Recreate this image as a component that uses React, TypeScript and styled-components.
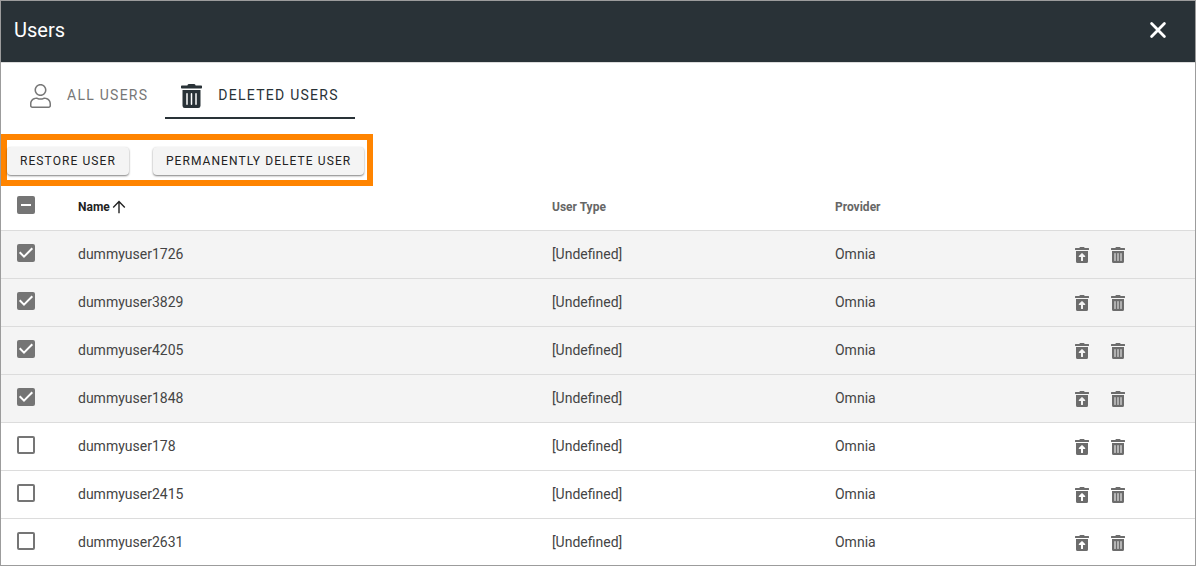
import React, { useState } from "react";
import styled, { createGlobalStyle } from "styled-components";
import { FaTrashAlt, FaTrashRestoreAlt } from "react-icons/fa";

const GlobalStyle = createGlobalStyle`
  *, *::before, *::after { box-sizing: border-box; }
  body {
    margin: 0;
    background: #fff;
    color: #333;
    font-family: Roboto, "Liberation Sans", sans-serif;
  }
  button { font-family: inherit; cursor: pointer; }
`;

const Panel = styled.main`
  display: flex;
  flex-direction: column;
  height: 100vh;
  border: 1px solid #9c9c9c;
`;

const Header = styled.header`
  display: flex;
  flex: none;
  align-items: center;
  justify-content: space-between;
  height: 62px;
  padding: 0 25px 4px 13px;
  background: #293237;
  border-bottom: 1px solid #dcdcdc;
  color: #fff;
`;

const Title = styled.h1`
  margin: 0;
  font-size: 20px;
  font-weight: 400;
  line-height: 32px;
`;

const CloseButton = styled.button`
  display: flex;
  padding: 2px;
  border: 0;
  background: none;
  color: #fff;
`;

const TabBar = styled.nav`
  display: flex;
  flex: none;
  gap: 1px;
  padding: 8px 13px 15px;
`;

const Tab = styled.button<{ $active?: boolean }>`
  display: flex;
  align-items: center;
  gap: 16px;
  height: 48px;
  padding: 4px 16px 0;
  border: 0;
  border-bottom: 2px solid ${(p) => (p.$active ? "#293237" : "transparent")};
  background: none;
  color: ${(p) => (p.$active ? "#293237" : "#777")};
  font-size: 14px;
  line-height: 20px;
  letter-spacing: 0.09em;
  text-transform: uppercase;
  white-space: nowrap;

  svg {
    width: 21px;
    height: 24px;
  }
`;

const TabLabel = styled.span`
  padding-bottom: 2px;
`;

const Toolbar = styled.div`
  display: flex;
  flex: none;
  align-self: flex-start;
  gap: 24px;
  padding: 7px 3px 5px 0;
  border: 6px solid #ff8400;
`;

const ToolButton = styled.button`
  height: 28px;
  padding: 0 13px;
  border: 0;
  border-radius: 4px;
  background: #f4f4f4;
  box-shadow: 0 1px 2px rgba(0, 0, 0, 0.5);
  color: #222;
  font-size: 12px;
  line-height: 16px;
  letter-spacing: 0.09em;
  text-transform: uppercase;
  white-space: nowrap;
`;

const TableArea = styled.div`
  flex: 1;
  min-height: 0;
  overflow: auto;
  scrollbar-width: none;
`;

const Table = styled.table`
  width: 100%;
  table-layout: fixed;
  border-collapse: separate;
  border-spacing: 0;
  text-align: left;
`;

const Col = styled.col<{ $width: string }>`
  width: ${(p) => p.$width};
`;

const HeadCell = styled.th<{ $sorted?: boolean }>`
  height: 45px;
  padding: 0 16px 2px;
  border-bottom: 1px solid #dcdcdc;
  color: ${(p) => (p.$sorted ? "#222" : "#666")};
  font-size: 12px;
  font-weight: 700;
  line-height: 16px;
`;

const SortLabel = styled.span`
  display: flex;
  align-items: center;
  gap: 2px;
`;

const Row = styled.tr<{ $selected: boolean }>`
  background: ${(p) => (p.$selected ? "#f4f4f4" : "#fff")};
`;

const Cell = styled.td`
  height: 48px;
  padding: 0 16px 2px;
  border-bottom: 1px solid #dcdcdc;
  color: #444;
  font-size: 14px;
  line-height: 20px;
`;

const CheckWrap = styled.label`
  position: relative;
  display: block;
  width: 18px;
  height: 18px;
  margin-bottom: 2px;

  th & {
    margin-bottom: 4px;
  }
`;

const CheckInput = styled.input<{ $filled: boolean }>`
  display: block;
  width: 18px;
  height: 18px;
  margin: 0;
  appearance: none;
  border: 2px solid #757575;
  border-radius: 2px;
  background: ${(p) => (p.$filled ? "#757575" : "#fff")};
`;

const CheckMark = styled.svg`
  position: absolute;
  inset: 0;
  fill: none;
  stroke: #fff;
  stroke-width: 2;
  pointer-events: none;
`;

const Actions = styled.div`
  display: flex;
  gap: 20px;
  padding-top: 2px;
`;

const IconButton = styled.button`
  display: flex;
  justify-content: center;
  width: 16px;
  padding: 0;
  border: 0;
  background: none;
  color: #6c6c6c;
`;

function Checkbox(props: {
  label: string;
  checked: boolean;
  mixed?: boolean;
  onChange: () => void;
}) {
  const { label, checked, mixed = false, onChange } = props;
  return (
    <CheckWrap>
      <CheckInput
        type="checkbox"
        aria-label={label}
        aria-checked={mixed ? "mixed" : checked}
        checked={checked}
        onChange={onChange}
        $filled={checked || mixed}
      />
      {(checked || mixed) && (
        <CheckMark width="18" height="18" viewBox="0 0 18 18">
          {mixed ? <path d="M4 9h10" /> : <path d="M2.7 8.3L7 12.6 15.3 4.3" />}
        </CheckMark>
      )}
    </CheckWrap>
  );
}

const UserOutline = () => (
  <svg viewBox="0 0 448 512" fill="currentColor" aria-hidden="true">
    <path d="M313.6 288c-28.7 0-42.5 16-89.6 16-47.1 0-60.8-16-89.6-16C60.2 288 0 348.2 0 422.4V464c0 26.5 21.5 48 48 48h352c26.5 0 48-21.5 48-48v-41.6c0-74.2-60.2-134.4-134.4-134.4zM416 464c0 8.8-7.2 16-16 16H48c-8.8 0-16-7.2-16-16v-41.6C32 365.9 77.9 320 134.4 320c19.6 0 39.1 16 89.6 16 50.4 0 70-16 89.6-16 56.5 0 102.4 45.9 102.4 102.4V464zM224 256c70.7 0 128-57.3 128-128S294.7 0 224 0 96 57.3 96 128s57.3 128 128 128zm0-224c52.9 0 96 43.1 96 96s-43.1 96-96 96-96-43.1-96-96 43.1-96 96-96z" />
  </svg>
);

const users = [
  "dummyuser1726",
  "dummyuser3829",
  "dummyuser4205",
  "dummyuser1848",
  "dummyuser178",
  "dummyuser2415",
  "dummyuser2631",
];

export default function App() {
  const [selected, setSelected] = useState<string[]>(users.slice(0, 4));
  const all = selected.length === users.length;
  const toggle = (name: string) =>
    setSelected((s) => (s.includes(name) ? s.filter((n) => n !== name) : [...s, name]));

  return (
    <Panel>
      <GlobalStyle />
      <Header>
        <Title>Users</Title>
        <CloseButton type="button" aria-label="Close">
          <svg width="20" height="20" viewBox="0 0 20 20" stroke="currentColor" strokeWidth="2.8" strokeLinecap="round">
            <path d="M3.6 3.6l12.8 12.8M16.4 3.6L3.6 16.4" />
          </svg>
        </CloseButton>
      </Header>
      <TabBar>
        <Tab type="button">
          <UserOutline />
          <TabLabel>All users</TabLabel>
        </Tab>
        <Tab type="button" $active>
          <FaTrashAlt />
          <TabLabel>Deleted users</TabLabel>
        </Tab>
      </TabBar>
      <Toolbar>
        <ToolButton type="button">Restore user</ToolButton>
        <ToolButton type="button">Permanently delete user</ToolButton>
      </Toolbar>
      <TableArea>
        <Table>
          <colgroup>
            <Col $width="61px" />
            <Col $width="39.7%" />
            <Col $width="23.7%" />
            <Col $width="20%" />
            <Col $width="auto" />
          </colgroup>
          <thead>
            <tr>
              <HeadCell scope="col">
                <Checkbox
                  label="Select all users"
                  checked={all}
                  mixed={selected.length > 0 && !all}
                  onChange={() => setSelected(all ? [] : users)}
                />
              </HeadCell>
              <HeadCell scope="col" aria-sort="ascending" $sorted>
                <SortLabel>
                  Name
                  <svg width="14" height="14" viewBox="0 0 14 14" fill="none" stroke="currentColor" strokeWidth="1.4" aria-hidden="true">
                    <path d="M7 13.2V1.8M1.2 7.4L7 1.6l5.8 5.8" />
                  </svg>
                </SortLabel>
              </HeadCell>
              <HeadCell scope="col">User Type</HeadCell>
              <HeadCell scope="col">Provider</HeadCell>
              <HeadCell scope="col" aria-label="Actions" />
            </tr>
          </thead>
          <tbody>
            {users.map((name) => (
              <Row key={name} $selected={selected.includes(name)}>
                <Cell>
                  <Checkbox
                    label={`Select ${name}`}
                    checked={selected.includes(name)}
                    onChange={() => toggle(name)}
                  />
                </Cell>
                <Cell>{name}</Cell>
                <Cell>[Undefined]</Cell>
                <Cell>Omnia</Cell>
                <Cell>
                  <Actions>
                    <IconButton type="button" aria-label={`Restore ${name}`}>
                      <FaTrashRestoreAlt size={16} />
                    </IconButton>
                    <IconButton type="button" aria-label={`Permanently delete ${name}`}>
                      <FaTrashAlt size={16} />
                    </IconButton>
                  </Actions>
                </Cell>
              </Row>
            ))}
          </tbody>
        </Table>
      </TableArea>
    </Panel>
  );
}
